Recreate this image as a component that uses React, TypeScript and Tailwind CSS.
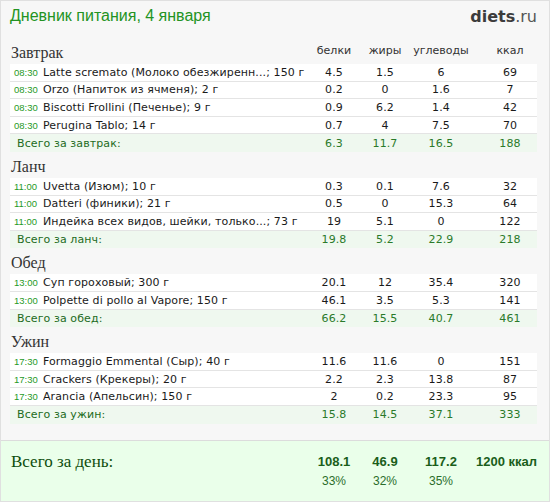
import React from 'react';

type Item = { time: string; name: string; p: string; f: string; c: string; k: string };
type Meal = { title: string; total: string; items: Item[]; sum: [string, string, string, string] };

const meals: Meal[] = [
  {
    title: 'Завтрак',
    total: 'Всего за завтрак:',
    items: [
      { time: '08:30', name: 'Latte scremato (Молоко обезжиренн...; 150 г', p: '4.5', f: '1.5', c: '6', k: '69' },
      { time: '08:30', name: 'Orzo (Напиток из ячменя); 2 г', p: '0.2', f: '0', c: '1.6', k: '7' },
      { time: '08:30', name: 'Biscotti Frollini (Печенье); 9 г', p: '0.9', f: '6.2', c: '1.4', k: '42' },
      { time: '08:30', name: 'Perugina Tablo; 14 г', p: '0.7', f: '4', c: '7.5', k: '70' },
    ],
    sum: ['6.3', '11.7', '16.5', '188'],
  },
  {
    title: 'Ланч',
    total: 'Всего за ланч:',
    items: [
      { time: '11:00', name: 'Uvetta (Изюм); 10 г', p: '0.3', f: '0.1', c: '7.6', k: '32' },
      { time: '11:00', name: 'Datteri (финики); 21 г', p: '0.5', f: '0', c: '15.3', k: '64' },
      { time: '11:00', name: 'Индейка всех видов, шейки, только...; 73 г', p: '19', f: '5.1', c: '0', k: '122' },
    ],
    sum: ['19.8', '5.2', '22.9', '218'],
  },
  {
    title: 'Обед',
    total: 'Всего за обед:',
    items: [
      { time: '13:00', name: 'Суп гороховый; 300 г', p: '20.1', f: '12', c: '35.4', k: '320' },
      { time: '13:00', name: 'Polpette di pollo al Vapore; 150 г', p: '46.1', f: '3.5', c: '5.3', k: '141' },
    ],
    sum: ['66.2', '15.5', '40.7', '461'],
  },
  {
    title: 'Ужин',
    total: 'Всего за ужин:',
    items: [
      { time: '17:30', name: 'Formaggio Emmental (Сыр); 40 г', p: '11.6', f: '11.6', c: '0', k: '151' },
      { time: '17:30', name: 'Crackers (Крекеры); 20 г', p: '2.2', f: '2.3', c: '13.8', k: '87' },
      { time: '17:30', name: 'Arancia (Апельсин); 150 г', p: '2', f: '0.2', c: '23.3', k: '95' },
    ],
    sum: ['15.8', '14.5', '37.1', '333'],
  },
];

const cols = 'grid grid-cols-[33px_1fr_50px_52px_60px_66px]';
const sans = "font-['DejaVu_Sans',Verdana,sans-serif]";
const serif = "font-['Liberation_Serif',serif]";

const App = () => {
  return (
    <div className="w-[550px] h-[502px] bg-white">
      <div className="flex flex-col h-full border border-[#e0e0e0] bg-[#f7f7f7]">
        <div className="flex justify-between items-start h-[37px] pl-[9px] pr-[12px] pt-[6px]">
          <div className="font-['Liberation_Sans',Arial,sans-serif] text-[16px] leading-[18px] text-[#239323]">
            Дневник питания, 4 января
          </div>
          <div className={`${sans} text-[16px] leading-[18px] text-[#3c3c3c] mt-[1px]`}>
            <span className="font-bold">diets</span>
            <span className="text-[#555]">.ru</span>
          </div>
        </div>

        <div className="pl-[9px] pr-[12px]">
          {meals.map((m, i) => (
            <div key={m.title}>
              <div className={`${cols} h-[26px] items-end`}>
                <div className={`col-span-2 ${serif} text-[16px] leading-[18px] text-[#333] pl-[1px] pb-[2px]`}>
                  {m.title}
                </div>
                {i === 0 &&
                  ['белки', 'жиры', 'углеводы'].map((h) => (
                    <div key={h} className={`${sans} text-[11px] leading-[14px] text-[#333] text-center pb-[6px]`}>
                      {h}
                    </div>
                  ))}
                {i === 0 && (
                  <div className={`${sans} text-[11px] leading-[14px] text-[#333] text-center pl-3 pb-[6px]`}>
                    ккал
                  </div>
                )}
              </div>
              {m.items.map((it, j) => (
                <div
                  key={j}
                  className={`${cols} h-[17.6px] border-b border-[#e4e4e4] bg-white items-center pt-[1px] ${sans} text-[11px] leading-[14px] tracking-[0.1px] text-[#1a1a1a]`}
                >
                  <div className="pl-[4px] font-['Liberation_Sans',Arial,sans-serif] text-[9.5px] tracking-normal text-[#1f9a1f]">
                    {it.time}
                  </div>
                  <div className="whitespace-nowrap overflow-hidden">{it.name}</div>
                  <div className="text-center">{it.p}</div>
                  <div className="text-center">{it.f}</div>
                  <div className="text-center">{it.c}</div>
                  <div className="text-center pl-3">{it.k}</div>
                </div>
              ))}
              <div
                className={`${cols} h-[17.6px] bg-[#eff8ef] items-center pt-[1px] ${sans} text-[11px] leading-[14px] tracking-[0.1px] text-[#1d6b1d]`}
              >
                <div className="col-span-2 pl-[7px]">{m.total}</div>
                <div className="text-center text-[#2a7a2a]">{m.sum[0]}</div>
                <div className="text-center text-[#2a7a2a]">{m.sum[1]}</div>
                <div className="text-center text-[#2a7a2a]">{m.sum[2]}</div>
                <div className="text-center pl-3 text-[#2a7a2a]">{m.sum[3]}</div>
              </div>
            </div>
          ))}
        </div>

        <div className="flex-1" />

        <div className="h-[61px] border-t border-[#dcdcdc] bg-[#eaffea] pl-[9px] pr-[12px] pt-[11px]">
          <div className={`${cols} items-end`}>
            <div className={`col-span-2 ${serif} text-[17px] leading-[20px] text-[#0d4d0d] pl-[1px]`}>
              Всего за день:
            </div>
            {['108.1', '46.9', '117.2'].map((v) => (
              <div
                key={v}
                className="text-center font-['Liberation_Sans',Arial,sans-serif] font-bold text-[13px] leading-[18px] text-[#1a5e1a] pb-[1px]"
              >
                {v}
              </div>
            ))}
            <div className="text-right font-['Liberation_Sans',Arial,sans-serif] font-bold text-[13px] leading-[18px] text-[#1a5e1a] pb-[1px]">
              1200 ккал
            </div>
          </div>
          <div className={`${cols} mt-[1px]`}>
            <div className="col-span-2" />
            {['33%', '32%', '35%'].map((v) => (
              <div
                key={v}
                className="text-center font-['Liberation_Sans',Arial,sans-serif] text-[12px] leading-[16px] text-[#2b6e2b]"
              >
                {v}
              </div>
            ))}
          </div>
        </div>
      </div>
    </div>
  );
};

export default App;
